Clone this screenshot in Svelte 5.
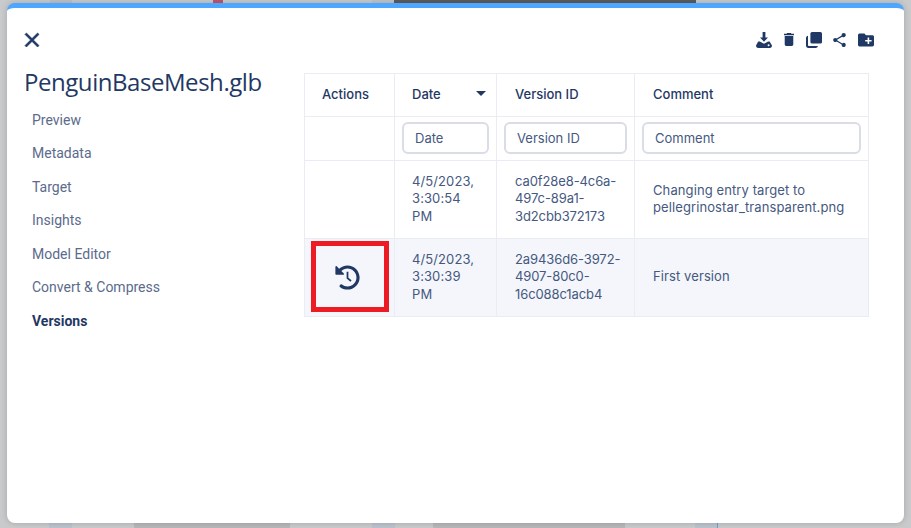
<script>
  const navItems = ['Preview', 'Metadata', 'Target', 'Insights', 'Model Editor', 'Convert & Compress', 'Versions'];
  const versions = [
    { date: '4/5/2023, 3:30:54 PM', id: 'ca0f28e8-4c6a-497c-89a1-3d2cbb372173', comment: 'Changing entry target to pellegrinostar_transparent.png', restore: false },
    { date: '4/5/2023, 3:30:39 PM', id: '2a9436d6-3972-4907-80c0-16c088c1acb4', comment: 'First version', restore: true }
  ];
</script>

<div class="page">
  <div class="strip top-a"></div>
  <div class="strip top-b"></div>
  <div class="strip red"></div>
  <div class="strip dark"></div>
  <div class="strip bottom-a"></div>
  <div class="strip bottom-b"></div>
  <div class="strip bottom-c"></div>
  <div class="strip bottom-d"></div>
  <div class="strip bottom-e"></div>

  <div class="modal">
    <div class="toolbar">
      <svg class="close" viewBox="0 0 24 24"><path d="M19 6.41L17.59 5 12 10.59 6.41 5 5 6.41 10.59 12 5 17.59 6.41 19 12 13.41 17.59 19 19 17.59 13.41 12z" stroke="currentColor" stroke-width="0.7"/></svg>
      <div class="tools">
        <svg viewBox="0 0 16 16"><path d="M6.600 0h2.800v5.600H12L8 9.800 4 5.600h2.600z"/><path fill-rule="evenodd" d="M2.200 9.400h1.600L8 11.800l4.200-2.400h1.400L16 13.600c0 1.400-.9 2.400-2.200 2.400H2.200C.9 16 0 15 0 13.600zM12.600 12.300a1 1 0 1 0 0 2 1 1 0 0 0 0-2z"/></svg>
        <svg class="trash" viewBox="5 3 14 18"><path d="M6 19c0 1.100.9 2 2 2h8c1.100 0 2-.9 2-2V7H6v12zM19 4h-3.500l-1-1h-5l-1 1H5v2h14V4z"/></svg>
        <svg viewBox="0 0 16 16"><rect x="4.400" y="0" width="11.600" height="11.600" rx="1.600"/><path d="M0 6.200C0 5 .9 4 2 3.800V13c0 .6.4 1 1 1h8.900c-.2 1.200-1.100 2-2.300 2H2.400C1 16 0 15 0 13.600z"/></svg>
        <svg class="share" viewBox="3 2 18 20"><path d="M18 16.080c-.76 0-1.440.3-1.960.77L8.910 12.700c.05-.23.09-.46.09-.7s-.04-.47-.09-.7l7.050-4.110c.54.5 1.250.81 2.040.81 1.660 0 3-1.340 3-3s-1.340-3-3-3-3 1.340-3 3c0 .24.04.47.09.7L8.040 9.810C7.500 9.310 6.790 9 6 9c-1.660 0-3 1.340-3 3s1.340 3 3 3c.79 0 1.500-.31 2.040-.81l7.120 4.160c-.05.21-.08.43-.08.65 0 1.610 1.310 2.920 2.920 2.920 1.610 0 2.920-1.310 2.920-2.920s-1.310-2.920-2.920-2.920z"/></svg>
        <svg class="folder" viewBox="2 4 20 16"><path d="M20 6h-8l-2-2H4c-1.110 0-1.990.89-1.990 2L2 18c0 1.110.89 2 2 2h16c1.110 0 2-.89 2-2V8c0-1.110-.89-2-2-2zm-1 8h-3v3h-2v-3h-3v-2h3V9h2v3h3v2z"/></svg>
      </div>
    </div>

    <div class="body">
      <aside>
        <h1>PenguinBaseMesh.glb</h1>
        <nav>
          {#each navItems as item}
            <a class:active={item === 'Versions'} href="#top">{item}</a>
          {/each}
        </nav>
      </aside>

      <table>
        <colgroup>
          <col class="c1" /><col class="c2" /><col class="c3" /><col class="c4" />
        </colgroup>
        <thead>
          <tr class="head">
            <th>Actions</th>
            <th><span class="sortable">Date<i class="caret"></i></span></th>
            <th>Version ID</th>
            <th>Comment</th>
          </tr>
          <tr class="filters">
            <th></th>
            <th><input placeholder="Date" /></th>
            <th><input placeholder="Version ID" /></th>
            <th><input placeholder="Comment" /></th>
          </tr>
        </thead>
        <tbody>
          {#each versions as v}
            <tr class:alt={v.restore}>
              <td class="action">
                {#if v.restore}
                  <span class="restore">
                    <svg viewBox="0 0 512 512"><path d="M504 255.531c.253 136.640-111.180 248.372-247.820 248.468-59.015.042-113.223-20.530-155.822-54.911-11.077-8.940-11.905-25.541-1.839-35.607l11.267-11.267c8.609-8.609 22.353-9.551 31.891-1.984C173.062 425.135 212.781 440 256 440c101.705 0 184-82.311 184-184 0-101.705-82.311-184-184-184-48.814 0-93.149 18.969-126.068 49.932l50.754 50.754c10.080 10.080 2.941 27.314-11.313 27.314H24c-8.837 0-16-7.163-16-16V38.627c0-14.254 17.234-21.393 27.314-11.314l49.372 49.372C129.209 34.136 189.552 8 256 8c136.810 0 247.747 110.780 248 247.531z"/><path class="hands" d="M256 140v130l72 58"/></svg>
                    <b class="marker"></b>
                  </span>
                {/if}
              </td>
              <td>{v.date}</td>
              <td>{v.id}</td>
              <td>{v.comment}</td>
            </tr>
          {/each}
        </tbody>
      </table>
    </div>
  </div>
</div>

<style>
  :global(body) {
    font-family: "Inter", sans-serif;
    overflow: hidden;
  }

  .page {
    position: relative;
    width: 911px;
    height: 528px;
    background: #c9cacc;
    overflow: hidden;
  }

  .strip {
    position: absolute;
  }

  .top-a { left: 50px; top: 0; width: 22px; height: 3px; background: #bfc1c4; }
  .top-b { left: 372px; top: 0; width: 22px; height: 3px; background: #bfc4cb; }
  .red { left: 213px; top: 0; width: 10px; height: 3px; background: #c0566e; }
  .dark { left: 394px; top: 0; width: 302px; height: 3px; background: #5c5c5e; }

  .bottom-a { left: 49px; bottom: 0; width: 23px; height: 5px; background: #bcc3cc; }
  .bottom-b { left: 134px; bottom: 0; width: 156px; height: 5px; background: #b8b8ba; }
  .bottom-c { left: 372px; bottom: 0; width: 23px; height: 5px; background: #bcc3cc; }
  .bottom-d { left: 433px; bottom: 0; width: 192px; height: 5px; background: #b8b8ba; }
  .bottom-e { left: 695px; bottom: 0; width: 22px; height: 5px; background: #bcc3cc; border-right: 1px solid #6f9fd8; }

  .modal {
    position: absolute;
    left: 7px;
    top: 3px;
    width: 897px;
    height: 520px;
    box-sizing: border-box;
    background: #fff;
    border-top: 5px solid #4da6ff;
    border-radius: 8px;
    box-shadow: 0 0 6px rgba(0, 0, 0, 0.18);
    color: #1f3864;
  }

  .toolbar {
    display: flex;
    align-items: center;
    justify-content: space-between;
    padding: 19px 30px 0 13px;
    height: 25px;
  }

  .close {
    width: 24px;
    height: 24px;
    fill: currentColor;
  }

  .tools {
    display: flex;
    align-items: center;
    gap: 11.75px;
  }

  .tools svg {
    width: 16px;
    height: 16px;
    fill: currentColor;
  }

  .tools .trash {
    width: 10px;
    height: 13px;
  }

  .tools .share {
    width: 13px;
    height: 14px;
  }

  .tools .folder {
    width: 16px;
    height: 14px;
  }

  .body {
    display: flex;
    padding: 15px 0 0 17px;
    align-items: flex-start;
  }

  aside {
    width: 280px;
  }

  h1 {
    margin: 0;
    font-family: "Open Sans", sans-serif;
    font-size: 24px;
    line-height: 30px;
    font-weight: 400;
    letter-spacing: -0.45px;
    white-space: nowrap;
  }

  nav {
    display: flex;
    flex-direction: column;
    padding: 6.6px 0 0 8px;
  }

  nav a {
    height: 33.5px;
    line-height: 33.5px;
    font-family: "Roboto", sans-serif;
    font-size: 14px;
    color: #5b6b8c;
    text-decoration: none;
  }

  nav a.active {
    color: #1f3864;
    font-weight: 700;
  }

  table {
    width: 564px;
    margin-top: 6px;
    table-layout: fixed;
    border-collapse: collapse;
    font-size: 13px;
    line-height: 17.5px;
  }

  .c1 { width: 90px; }
  .c2 { width: 102px; }
  .c3 { width: 138px; }
  .c4 { width: 234px; }

  th, td {
    border: 1px solid #e9ecf2;
    padding: 0 7px 0 18px;
    text-align: left;
    box-sizing: border-box;
  }

  th {
    font-weight: 500;
    color: #1f3864;
  }

  th:first-child {
    padding-left: 17px;
  }

  td {
    color: #45597f;
    letter-spacing: 0.1px;
    padding-bottom: 1px;
  }

  th:nth-child(2), td:nth-child(2) {
    padding-left: 17px;
  }

  td:nth-child(2) {
    padding-right: 17px;
  }

  td:nth-child(3) {
    letter-spacing: -0.1px;
  }

  .head th {
    height: 43px;
  }

  .filters th {
    height: 44px;
    padding: 0 7px;
    font-weight: 400;
  }

  tbody tr {
    height: 78px;
  }

  tr.alt td {
    background: #f4f6fb;
  }

  td.action {
    padding: 0;
  }

  .sortable {
    display: flex;
    justify-content: space-between;
    align-items: center;
    padding-right: 3px;
  }

  .caret {
    width: 0;
    height: 0;
    margin-top: -4px;
    border-left: 5px solid transparent;
    border-right: 5px solid transparent;
    border-top: 5px solid #1f3864;
  }

  input {
    display: block;
    width: 100%;
    height: 32px;
    margin: -1px 0 1px;
    box-sizing: border-box;
    border: 2px solid #d8dde6;
    border-radius: 6px;
    padding: 0 11px;
    font: inherit;
    font-size: 13px;
    background: #fff;
    color: #45597f;
    outline: none;
  }

  input::placeholder {
    color: #45597f;
    opacity: 1;
  }

  .restore {
    position: relative;
    display: block;
    height: 25px;
    padding-right: 4px;
  }

  .restore svg {
    width: 25px;
    height: 25px;
    fill: #1f3864;
    display: block;
    margin: 0 auto;
  }

  .hands {
    fill: none;
    stroke: #1f3864;
    stroke-width: 36;
  }

  .marker {
    position: absolute;
    left: 6px;
    top: -24px;
    width: 78px;
    height: 71px;
    box-sizing: border-box;
    border: 5px solid #ed1c24;
  }
</style>
